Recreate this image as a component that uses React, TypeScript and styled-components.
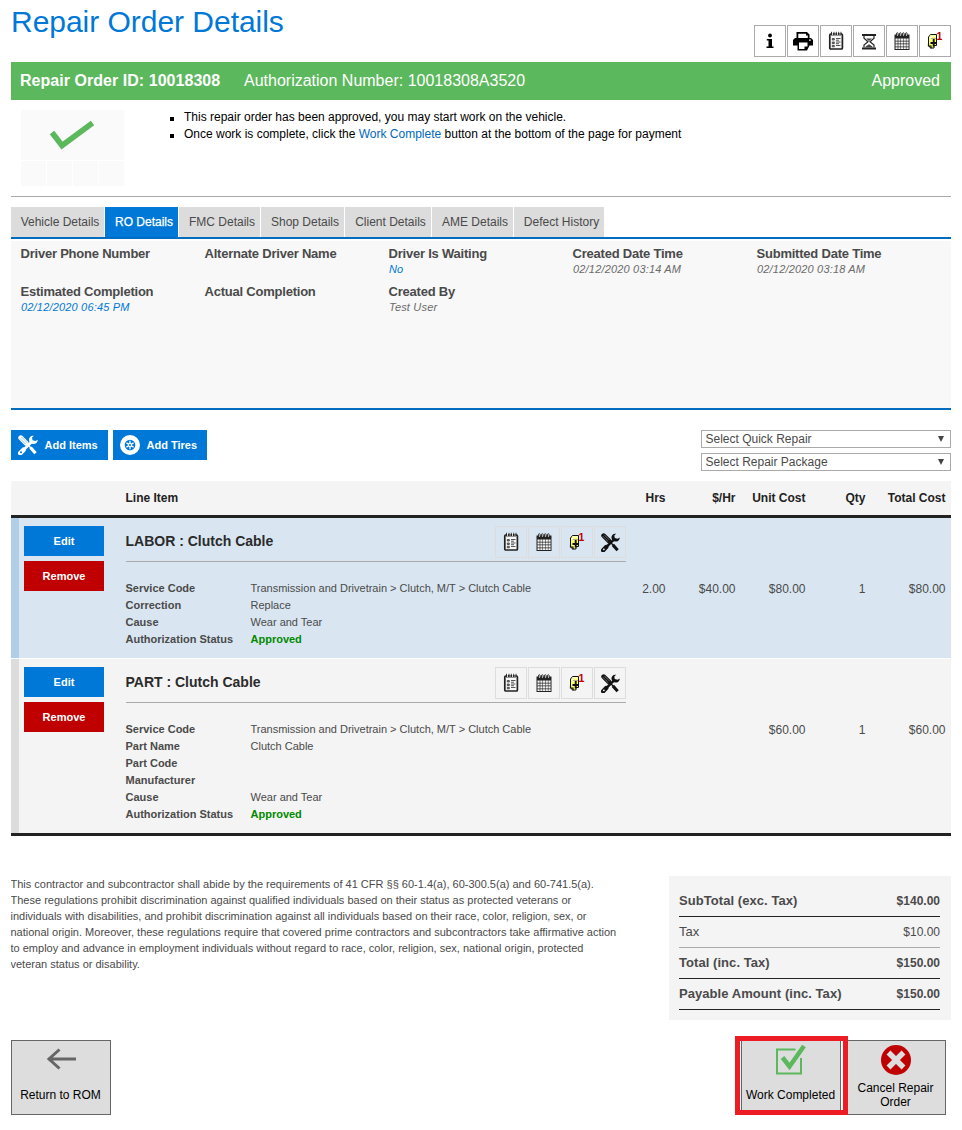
import React from "react";
import styled, { createGlobalStyle } from "styled-components";

const Global = createGlobalStyle`
  * { box-sizing: border-box; }
  body { margin: 0; background: #fff; font-family: "Liberation Sans", Arial, sans-serif; font-size: 12px; color: #4a4a4a; }
  button { font-family: inherit; cursor: pointer; }
  svg { display: block; flex: none; }
`;

const Page = styled.main`
  width: 940px;
  margin-left: 11px;
  height: 1130px;
  overflow: hidden;
`;
const Header = styled.header`
  display: flex;
  justify-content: space-between;
  height: 62px;
`;
const Title = styled.h1`
  margin: 4px 0 0;
  font-size: 30px;
  line-height: 35px;
  font-weight: 400;
  letter-spacing: -0.03px;
  color: #0078d7;
  white-space: nowrap;
`;
const IconRow = styled.div<{ $top?: number }>`
  display: flex;
  gap: 1px;
  margin-top: ${(p) => p.$top ?? 0}px;
`;
const IconBox = styled.button<{ $soft?: boolean }>`
  display: flex;
  align-items: center;
  justify-content: center;
  width: 32px;
  height: 32px;
  padding: 0;
  border: 1px solid ${(p) => (p.$soft ? "#dddddd" : "#aaaaaa")};
  background: transparent;
`;
const Banner = styled.div`
  display: flex;
  align-items: center;
  height: 38px;
  padding: 0 11px 0 9px;
  background: #5cb85c;
  color: #fff;
  font-size: 16px;
`;
const OrderId = styled.strong`
  width: 224px;
  white-space: nowrap;
  letter-spacing: 0.04px;
`;
const Status = styled.span`
  margin-left: auto;
`;
const Notice = styled.section`
  display: flex;
  height: 97px;
  padding: 10px 0 0 10px;
  border-bottom: 1px solid #aaa;
`;
const Thumb = styled.div`
  display: grid;
  grid-template-columns: repeat(4, 25px);
  grid-template-rows: 50px 25px;
  gap: 1px;
  width: 103px;
`;
const ThumbMain = styled.div`
  grid-column: 1 / -1;
  background: #fafafa;
`;
const ThumbCell = styled.div`
  background: #fafafa;
`;
const Messages = styled.ul`
  margin: -1px 0 0 46px;
  padding: 0;
  list-style: none;
  color: #000;
  line-height: 17px;
`;
const Message = styled.li`
  display: flex;
  align-items: center;
  white-space: pre;
  &::before {
    content: "";
    width: 4px;
    height: 4px;
    margin: 2px 10px 0 0;
    background: #000;
  }
`;
const Link = styled.a`
  color: #0069bf;
`;
const Tabs = styled.nav`
  display: flex;
  gap: 1px;
  height: 32px;
  margin-top: 10px;
  border-bottom: 2px solid #006dbf;
`;
const Tab = styled.button<{ $w: number; $on?: boolean }>`
  width: ${(p) => p.$w}px;
  height: 30px;
  padding: 0 0 0 5px;
  border: 0;
  font-size: 12px;
  white-space: nowrap;
  text-align: center;
  color: ${(p) => (p.$on ? "#fff" : "#4a4a4a")};
  background: ${(p) => (p.$on ? "#0078d7" : "#dcdcdc")};
  -webkit-text-stroke: ${(p) => (p.$on ? "0.25px #fff" : "0")};
`;
const Panel = styled.section`
  display: grid;
  grid-template-columns: repeat(5, 184px);
  grid-auto-rows: 38px;
  height: 169px;
  margin-top: 2px;
  padding: 5px 0 0 10px;
  background: #f8f8f8;
  border-bottom: 2px solid #006dbf;
`;
const FieldLabel = styled.div`
  margin-left: -0.5px;
  font-size: 13px;
  font-weight: 700;
  line-height: 16px;
  letter-spacing: -0.22px;
  white-space: nowrap;
`;
const FieldValue = styled.div<{ $blue?: boolean }>`
  font-size: 11px;
  font-style: italic;
  line-height: 15px;
  letter-spacing: 0.18px;
  color: ${(p) => (p.$blue ? "#0078d7" : "#6b6b6b")};
`;
const Tools = styled.div`
  display: flex;
  gap: 5px;
  height: 51px;
  margin-top: 20px;
`;
const AddButton = styled.button<{ $w: number }>`
  display: flex;
  align-items: center;
  gap: 6.5px;
  width: ${(p) => p.$w}px;
  height: 30px;
  padding: 0 0 0 7px;
  border: 0;
  color: #fff;
  background: #0078d7;
  font-size: 11px;
  font-weight: 700;
  white-space: nowrap;
`;
const Selects = styled.div`
  display: flex;
  flex-direction: column;
  gap: 5px;
  margin-left: auto;
`;
const SelectBox = styled.div`
  display: flex;
  align-items: center;
  justify-content: space-between;
  width: 250px;
  height: 18px;
  padding: 0 6px 0 3.5px;
  border: 1px solid #aaa;
  line-height: 16px;
`;
const TableHead = styled.div`
  display: flex;
  height: 37px;
  padding-left: 114.5px;
  line-height: 34px;
  background: #f4f4f4;
  border-bottom: 3px solid #222;
  color: #222;
  font-weight: 700;
`;
const HeadName = styled.div`
  width: 500px;
`;
const Numbers = styled.div<{ $top?: number }>`
  display: grid;
  grid-template-columns: 40px 70px 70px 60px 80px;
  margin-top: ${(p) => p.$top ?? 0}px;
  text-align: right;
  white-space: nowrap;
`;
const Item = styled.article<{ $labor?: boolean }>`
  display: flex;
  height: ${(p) => (p.$labor ? 140 : 174)}px;
  padding: 8px 0 0 5px;
  border-left: 8px solid ${(p) => (p.$labor ? "#b0cee6" : "#dcdcdc")};
  background: ${(p) => (p.$labor ? "#d9e6f1" : "#f4f4f4")};
`;
const Items = styled.section`
  display: flex;
  flex-direction: column;
  gap: 1px;
  border-bottom: 3px solid #222;
`;
const Actions = styled.div`
  display: flex;
  flex-direction: column;
  gap: 5px;
  width: 102px;
`;
const ActionButton = styled.button<{ $danger?: boolean }>`
  width: 80px;
  height: 30px;
  padding: 0;
  border: 0;
  color: #fff;
  background: ${(p) => (p.$danger ? "#c00000" : "#0078d7")};
  font-size: 11px;
  font-weight: 700;
`;
const ItemBody = styled.div`
  width: 499.5px;
`;
const ItemHead = styled.div`
  display: flex;
  justify-content: space-between;
  width: 500px;
  height: 36px;
  border-bottom: 1px solid #aaa;
`;
const ItemTitle = styled.h2`
  margin: 0 0 0 -0.5px;
  font-size: 14px;
  line-height: 31px;
  color: #2b2b2b;
`;
const Details = styled.dl`
  display: grid;
  grid-template-columns: 125px 375px;
  grid-auto-rows: 17px;
  margin: 18px 0 0 -0.5px;
  font-size: 11px;
  line-height: 17px;
`;
const Term = styled.dt`
  font-weight: 700;
`;
const Desc = styled.dd<{ $ok?: boolean }>`
  margin: 0;
  font-weight: ${(p) => (p.$ok ? 700 : 400)};
  color: ${(p) => (p.$ok ? "#008a00" : "inherit")};
`;
const Summary = styled.section`
  display: flex;
  justify-content: space-between;
  height: 144px;
  margin-top: 40px;
`;
const Legal = styled.p`
  margin: 0 0 0 -0.5px;
  font-size: 11px;
  line-height: 16px;
  white-space: nowrap;
`;
const Totals = styled.div`
  width: 282px;
  padding: 10px 11px 0 10px;
  background: #f4f4f4;
`;
const TotalRow = styled.div<{ $light?: boolean }>`
  display: flex;
  justify-content: space-between;
  height: 31px;
  line-height: 29px;
  font-size: 13px;
  letter-spacing: 0.06px;
  font-weight: ${(p) => (p.$light ? 400 : 700)};
  border-bottom: 1px solid ${(p) => (p.$light ? "#aaa" : "#222")};
`;
const Amount = styled.span`
  font-size: 12px;
  line-height: 31px;
  letter-spacing: 0;
`;
const Footer = styled.footer`
  display: flex;
  height: 75px;
  margin-top: 20px;
  padding-right: 5px;
`;
const BigButton = styled.button<{ $push?: boolean }>`
  position: relative;
  display: flex;
  flex-direction: column;
  align-items: center;
  width: 100px;
  height: 75px;
  margin-left: ${(p) => (p.$push ? "auto" : "0")};
  padding: 4px 1px 0 0;
  border: 1px solid #666;
  background: #ddd;
  color: #000;
  font-size: 12px;
  line-height: 14px;
`;
const BigLabel = styled.span<{ $top: number }>`
  margin-top: ${(p) => p.$top}px;
`;
const Highlight = styled.div`
  position: absolute;
  left: -7px;
  top: -5px;
  width: 113px;
  height: 79px;
  border: 5px solid #ed1c24;
  z-index: 1;
`;
const Spacer = styled.div`
  width: 5px;
`;

const InfoIcon = () => (
  <svg width="20" height="20" viewBox="0 0 20 20">
    <circle cx="10" cy="4.500" r="1.900" />
    <path d="M6.800 8H12v7.500h1.500V17h-7v-1.500H8.500v-6H6.800z" />
  </svg>
);
const PrintIcon = () => (
  <svg width="20" height="20" viewBox="0 0 20 20">
    <path d="M3.500 1h10.500l2.500 2.500V7h1.500l2 2v5.500h-3.500L14 19.500H4.500v-5H0V9l2-2h1.500z" />
    <path d="M5.300 2.700h7.700v1.800h1.800V7H5.300z" fill="#fff" />
    <path d="M6 11.500h8.500v4H11.500v2.500H6z" fill="#fff" />
    <path d="M16 8.500h1.800v1.300H16z" fill="#fff" />
  </svg>
);
const ListIcon = () => (
  <svg width="16" height="20" viewBox="0 0 16 20">
    <rect x="1.800" y="3" width="12.600" height="15" rx="1" fill="#f7f7f7" stroke="#222" strokeWidth="1.700" />
    <path d="M3 2h10v2.500H3z" fill="#333" />
    <path d="M4.500 1v3M7 1v3M9.500 1v3M12 1v3" stroke="#fff" strokeWidth=".8" />
    <path d="M3.500 .8v3M6 .8v3M8.300 .8v3M10.700 .8v3M13 .8v3" stroke="#222" strokeWidth=".9" />
    <path d="M4.300 7.500h2v1.500h-2zM4.300 11h2v1.500h-2zM4.300 14.300h2v1.500h-2z" fill="#999" stroke="#333" strokeWidth=".8" />
    <path d="M8 7.500h4.500M8 9.200h3M8 11h4.500M8 12.700h3M8 14.500h4.500" stroke="#444" strokeWidth=".9" />
  </svg>
);
const HourglassIcon = () => (
  <svg width="16" height="17" viewBox="0 0 16 17" fill="none" stroke="#222">
    <path d="M1 2h14M1 15.500h14" strokeWidth="1.800" />
    <path d="M3 3v2.200L7 8.700 3 12v2.500M13 3v2.200L9 8.700l4 3.300v2.500" strokeWidth="1.200" />
    <path d="M5 5.500h6L8 8zM4 14.500c1-2 3-2 4-3.500 1 1.500 3 1.500 4 3.500z" fill="#444" stroke="none" />
  </svg>
);
const CalendarIcon = () => (
  <svg width="16" height="18" viewBox="0 0 16 18">
    <path d="M.5 2.500h15V18H.5z" fill="#222" />
    <path d="M1.500 6.500h2.200v2.200H1.500zm2.800 0h2.200v2.200H4.300zm2.700 0h2.200v2.200H7zm2.700 0h2.200v2.200H9.700zm2.700 0h2.200v2.200h-2.200zM1.500 9.400h2.200v2.200H1.500zm2.800 0h2.200v2.200H4.300zm2.700 0h2.200v2.200H7zm2.700 0h2.200v2.200H9.700zm2.700 0h2.200v2.200h-2.200zM1.500 12.300h2.200v2.200H1.500zm2.800 0h2.200v2.200H4.300zm2.700 0h2.200v2.200H7zm2.700 0h2.200v2.200H9.700zm2.700 0h2.200v2.200h-2.200zM1.500 15.200h2.200v1.800H1.500zm2.800 0h2.200v1.800H4.300zm2.700 0h2.200v1.800H7zm2.700 0h2.200v1.800H9.700zm2.700 0h2.200v1.800h-2.200z" fill="#f4f4f4" />
    <path d="M2.500 4V1.200q.8-1 1.600 0V4M5.500 4V1.200q.8-1 1.600 0V4M8.500 4V1.200q.8-1 1.600 0V4M11.500 4V1.200q.8-1 1.600 0V4" fill="#fff" stroke="#222" strokeWidth=".9" />
  </svg>
);
const NoteIcon = () => (
  <svg width="18" height="20" viewBox="0 0 18 20">
    <path d="M4.500 3.500H10.500v11H8v2.500H4.500l-2-2.500V6z" fill="#ffff66" stroke="#111" strokeWidth="1" />
    <path d="M4.300 5H10M3.500 6.500h2v2" stroke="#fff" fill="none" />
    <path d="M5 7.500h5" stroke="#999" strokeWidth=".8" />
    <path d="M7.700 8v7.500M4.500 12h6.500" stroke="#111" strokeWidth="1.900" />
    <path d="M2.500 12.500v2.500h2.500v2.500" stroke="#111" strokeWidth="1.200" fill="none" />
    <text x="10.500" y="8.500" fontSize="10.500" fontWeight="700" fill="#c00000" fontFamily="Liberation Sans">1</text>
  </svg>
);
const ToolsIcon = ({ size = 19, color = "#111", hole = "#d9e6f1" }) => (
  <svg width={size} height={size} viewBox="0 0 20 20">
    <path d="M5 15.500L14 6.500" stroke={color} strokeWidth="2.600" />
    <path d="M16 .8c-3-.6-5.200 1.500-5 4.200.2 2.700 2.600 4.300 5 4 2.300-.3 3.700-2 3.800-4.300L17.500 6 14.500 5.200 14 2.600z" fill={color} />
    <path d="M2.300 18.200L5.500 14.800" stroke={color} strokeWidth="4.600" strokeLinecap="round" />
    <circle cx="3" cy="17.200" r="1" fill={hole} />
    <path d="M2.800 2.800l5.400 5.400" stroke={color} strokeWidth="5" strokeLinecap="round" />
    <path d="M2 3.500l5.500 5.500M3.500 2l5.500 5.500" stroke={hole} strokeWidth=".6" strokeDasharray="1.200 .5" />
    <path d="M9 9l5 5" stroke={color} strokeWidth="1.500" />
    <path d="M12.500 12.500l5 5.700" stroke={color} strokeWidth="3.200" />
  </svg>
);
const TireIcon = () => (
  <svg width="20" height="20" viewBox="0 0 20 20">
    <circle cx="10" cy="10" r="10" fill="#fff" />
    <circle cx="10" cy="10" r="5.300" fill="#0078d7" />
    <path d="M10 5.800v8.400M6.400 7.900l7.200 4.200M6.400 12.100l7.200-4.200" stroke="#fff" strokeWidth="1.300" />
    <circle cx="10" cy="10" r="1.900" fill="#fff" />
    <circle cx="10" cy="10" r="1" fill="#0078d7" />
  </svg>
);
const Caret = () => (
  <svg width="6" height="6">
    <path d="M0 0h6L3 6z" fill="#444" />
  </svg>
);

const fields: { label: string; value?: string; blue?: boolean }[] = [
  { label: "Driver Phone Number" },
  { label: "Alternate Driver Name" },
  { label: "Driver Is Waiting", value: "No", blue: true },
  { label: "Created Date Time", value: "02/12/2020 03:14 AM" },
  { label: "Submitted Date Time", value: "02/12/2020 03:18 AM" },
  { label: "Estimated Completion", value: "02/12/2020 06:45 PM", blue: true },
  { label: "Actual Completion" },
  { label: "Created By", value: "Test User" },
];
const tabs: [string, number][] = [
  ["Vehicle Details", 93],
  ["RO Details", 73],
  ["FMC Details", 81],
  ["Shop Details", 83],
  ["Client Details", 86],
  ["AME Details", 81],
  ["Defect History", 90],
];

interface LineItemProps {
  title: string;
  labor?: boolean;
  details: [string, string][];
  numbers: string[];
}
const LineItem = ({ title, labor, details, numbers }: LineItemProps) => (
  <Item $labor={labor}>
    <Actions>
      <ActionButton>Edit</ActionButton>
      <ActionButton $danger>Remove</ActionButton>
    </Actions>
    <ItemBody>
      <ItemHead>
        <ItemTitle>{title}</ItemTitle>
        <IconRow>
          <IconBox $soft><ListIcon /></IconBox>
          <IconBox $soft><CalendarIcon /></IconBox>
          <IconBox $soft><NoteIcon /></IconBox>
          <IconBox $soft><ToolsIcon hole={labor ? "#d9e6f1" : "#f4f4f4"} /></IconBox>
        </IconRow>
      </ItemHead>
      <Details>
        {details.map(([k, v]) => (
          <React.Fragment key={k}>
            <Term>{k}</Term>
            <Desc $ok={v === "Approved"}>{v}</Desc>
          </React.Fragment>
        ))}
      </Details>
    </ItemBody>
    <Numbers $top={56}>
      {numbers.map((n, i) => (
        <span key={i}>{n}</span>
      ))}
    </Numbers>
  </Item>
);

export default function App() {
  return (
    <Page>
      <Global />
      <Header>
        <Title>Repair Order Details</Title>
        <IconRow $top={25}>
          <IconBox><InfoIcon /></IconBox>
          <IconBox><PrintIcon /></IconBox>
          <IconBox><ListIcon /></IconBox>
          <IconBox><HourglassIcon /></IconBox>
          <IconBox><CalendarIcon /></IconBox>
          <IconBox><NoteIcon /></IconBox>
        </IconRow>
      </Header>
      <Banner>
        <OrderId>Repair Order ID: 10018308</OrderId>
        <span>Authorization Number: 10018308A3520</span>
        <Status>Approved</Status>
      </Banner>
      <Notice>
        <Thumb>
          <ThumbMain>
            <svg width="103" height="50" viewBox="0 0 103 50">
              <path d="M31 22.500L41 35.500 71.500 13" fill="none" stroke="#5cb85c" strokeWidth="5.600" />
            </svg>
          </ThumbMain>
          <ThumbCell /><ThumbCell /><ThumbCell /><ThumbCell />
        </Thumb>
        <Messages>
          <Message>This repair order has been approved, you may start work on the vehicle.</Message>
          <Message>Once work is complete, click the <Link>Work Complete</Link> button at the bottom of the page for payment</Message>
        </Messages>
      </Notice>
      <Tabs>
        {tabs.map(([t, w], i) => (
          <Tab key={t} $w={w} $on={i === 1}>{t}</Tab>
        ))}
      </Tabs>
      <Panel>
        {fields.map((f) => (
          <div key={f.label}>
            <FieldLabel>{f.label}</FieldLabel>
            {f.value && <FieldValue $blue={f.blue}>{f.value}</FieldValue>}
          </div>
        ))}
      </Panel>
      <Tools>
        <AddButton $w={97}><ToolsIcon size={20} color="#fff" hole="#0078d7" />Add Items</AddButton>
        <AddButton $w={94}><TireIcon />Add Tires</AddButton>
        <Selects>
          <SelectBox>Select Quick Repair<Caret /></SelectBox>
          <SelectBox>Select Repair Package<Caret /></SelectBox>
        </Selects>
      </Tools>
      <TableHead>
        <HeadName>Line Item</HeadName>
        <Numbers>
          <span>Hrs</span><span>$/Hr</span><span>Unit Cost</span><span>Qty</span><span>Total Cost</span>
        </Numbers>
      </TableHead>
      <Items>
        <LineItem
          labor
          title="LABOR : Clutch Cable"
          details={[
            ["Service Code", "Transmission and Drivetrain > Clutch, M/T > Clutch Cable"],
            ["Correction", "Replace"],
            ["Cause", "Wear and Tear"],
            ["Authorization Status", "Approved"],
          ]}
          numbers={["2.00", "$40.00", "$80.00", "1", "$80.00"]}
        />
        <LineItem
          title="PART : Clutch Cable"
          details={[
            ["Service Code", "Transmission and Drivetrain > Clutch, M/T > Clutch Cable"],
            ["Part Name", "Clutch Cable"],
            ["Part Code", ""],
            ["Manufacturer", ""],
            ["Cause", "Wear and Tear"],
            ["Authorization Status", "Approved"],
          ]}
          numbers={["", "", "$60.00", "1", "$60.00"]}
        />
      </Items>
      <Summary>
        <Legal>
          This contractor and subcontractor shall abide by the requirements of 41 CFR §§ 60-1.4(a), 60-300.5(a) and 60-741.5(a).<br />
          These regulations prohibit discrimination against qualified individuals based on their status as protected veterans or<br />
          individuals with disabilities, and prohibit discrimination against all individuals based on their race, color, religion, sex, or<br />
          national origin. Moreover, these regulations require that covered prime contractors and subcontractors take affirmative action<br />
          to employ and advance in employment individuals without regard to race, color, religion, sex, national origin, protected<br />
          veteran status or disability.
        </Legal>
        <Totals>
          <TotalRow><span>SubTotal (exc. Tax)</span><Amount>$140.00</Amount></TotalRow>
          <TotalRow $light><span>Tax</span><Amount>$10.00</Amount></TotalRow>
          <TotalRow><span>Total (inc. Tax)</span><Amount>$150.00</Amount></TotalRow>
          <TotalRow><span>Payable Amount (inc. Tax)</span><Amount>$150.00</Amount></TotalRow>
        </Totals>
      </Summary>
      <Footer>
        <BigButton>
          <svg width="30" height="30" viewBox="0 0 30 30" fill="none" stroke="#666" strokeWidth="3">
            <path d="M2 14H30M13.500 4.500L3 14l10.500 9.500" />
          </svg>
          <BigLabel $top={13}>Return to ROM</BigLabel>
        </BigButton>
        <BigButton $push>
          <Highlight />
          <svg width="30" height="30" viewBox="0 0 30 30" fill="none" stroke="#5cb85c">
            <path d="M19.500 4.500H1v24h24V13" strokeWidth="2" />
            <path d="M6.500 12.500l7 9L28 1" strokeWidth="4.500" />
          </svg>
          <BigLabel $top={13}>Work Completed</BigLabel>
        </BigButton>
        <Spacer />
        <BigButton>
          <svg width="30" height="30" viewBox="0 0 30 30">
            <circle cx="15" cy="15" r="15" fill="#c00000" />
            <path d="M7.500 7.500l15 15M22.500 7.500l-15 15" stroke="#ddd" strokeWidth="5.500" />
          </svg>
          <BigLabel $top={6}>Cancel Repair<br />Order</BigLabel>
        </BigButton>
      </Footer>
    </Page>
  );
}
